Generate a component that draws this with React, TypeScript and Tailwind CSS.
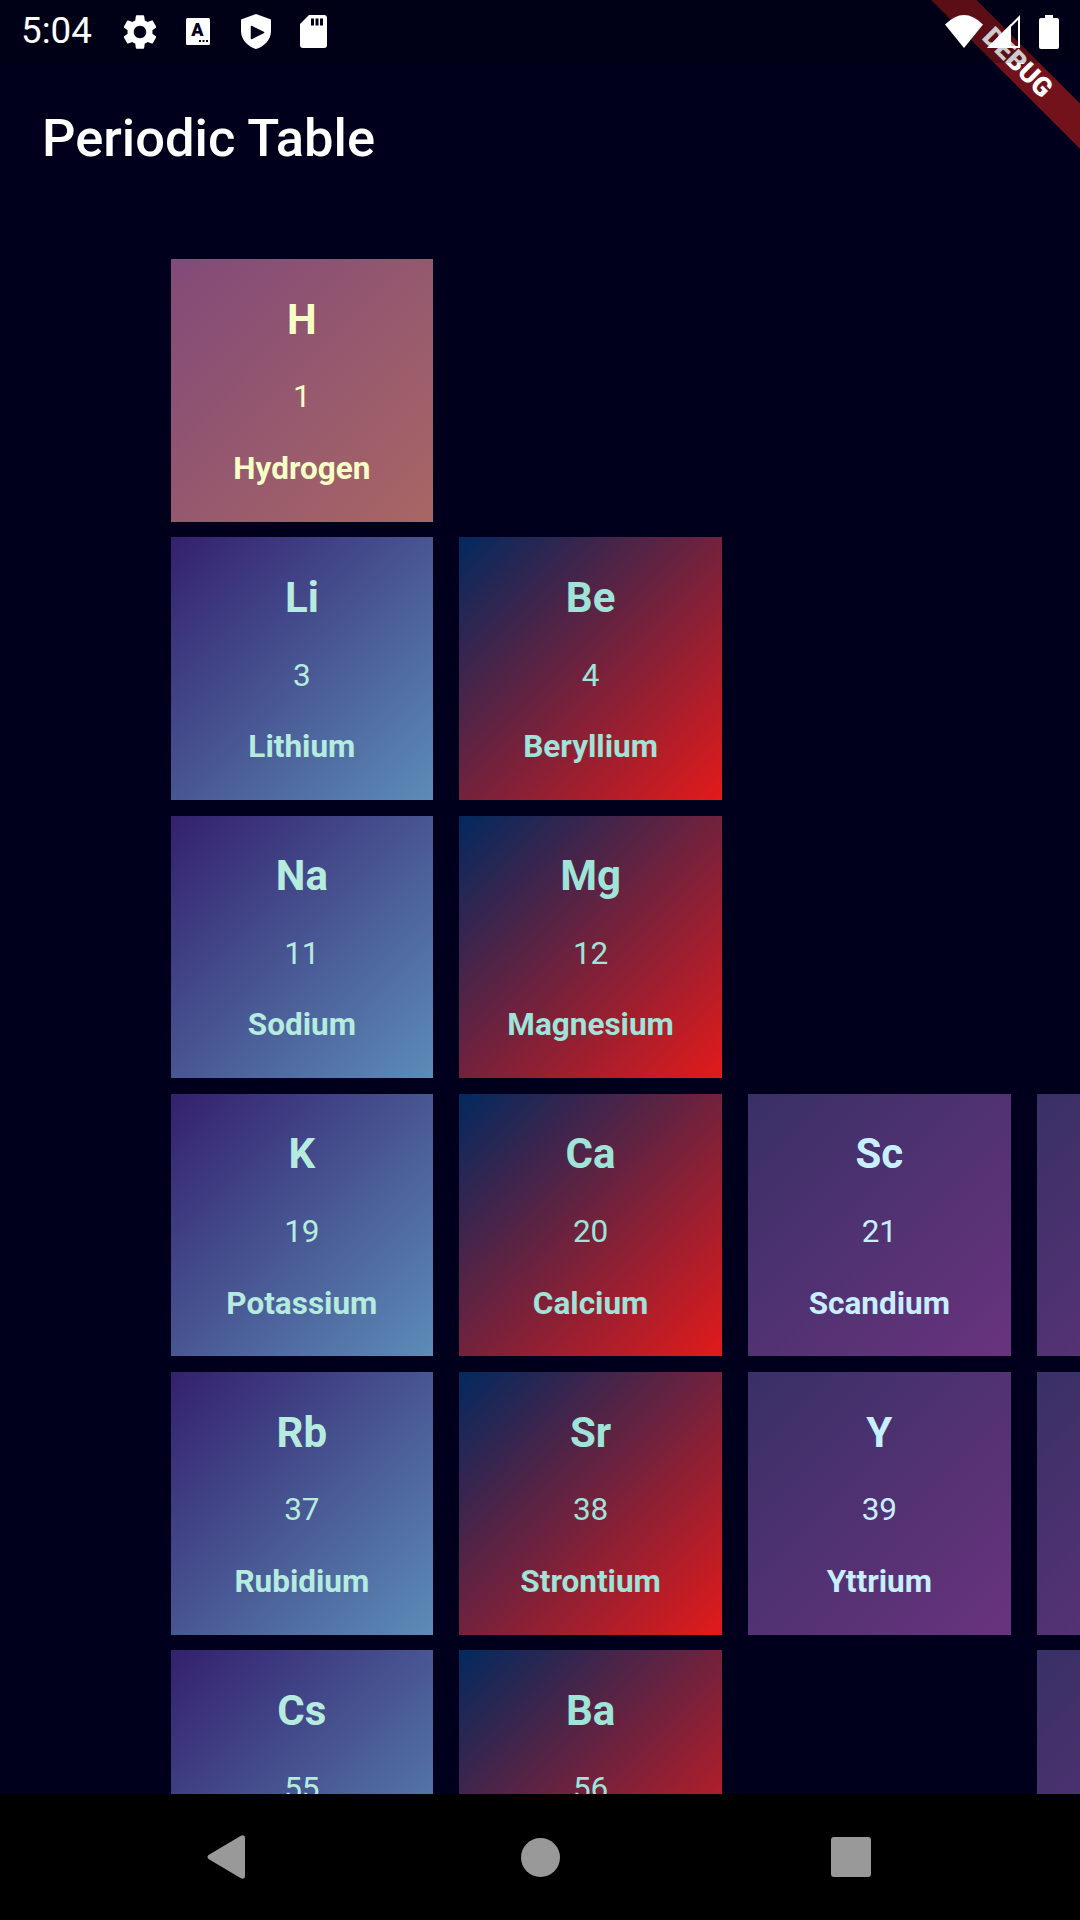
import React from "react";

type Element = {
  symbol: string;
  number: number;
  name: string;
  style: string;
};

const hydrogen = "from-[#824a79] to-[#a96664] text-[#f6ffc6]";
const alkali = "from-[#34206e] to-[#5c8cb8] text-[#b5ecdf]";
const alkaline = "from-[#02295f] to-[#e31a1a] text-[#a0e3d9]";
const transition = "from-[#393067] to-[#69337d] text-[#c8efff]";

const rows: (Element | null)[][] = [
  [{ symbol: "H", number: 1, name: "Hydrogen", style: hydrogen }, null, null, null],
  [
    { symbol: "Li", number: 3, name: "Lithium", style: alkali },
    { symbol: "Be", number: 4, name: "Beryllium", style: alkaline },
    null,
    null,
  ],
  [
    { symbol: "Na", number: 11, name: "Sodium", style: alkali },
    { symbol: "Mg", number: 12, name: "Magnesium", style: alkaline },
    null,
    null,
  ],
  [
    { symbol: "K", number: 19, name: "Potassium", style: alkali },
    { symbol: "Ca", number: 20, name: "Calcium", style: alkaline },
    { symbol: "Sc", number: 21, name: "Scandium", style: transition },
    { symbol: "Ti", number: 22, name: "Titanium", style: transition },
  ],
  [
    { symbol: "Rb", number: 37, name: "Rubidium", style: alkali },
    { symbol: "Sr", number: 38, name: "Strontium", style: alkaline },
    { symbol: "Y", number: 39, name: "Yttrium", style: transition },
    { symbol: "Zr", number: 40, name: "Zirconium", style: transition },
  ],
  [
    { symbol: "Cs", number: 55, name: "Cesium", style: alkali },
    { symbol: "Ba", number: 56, name: "Barium", style: alkaline },
    null,
    { symbol: "Hf", number: 72, name: "Hafnium", style: transition },
  ],
];

const ElementCard: React.FC<{ element: Element }> = ({ element }) => (
  <div
    className={`flex h-[262.5px] w-[262.5px] flex-col items-center justify-evenly bg-linear-to-br/srgb pt-[1px] ${element.style}`}
  >
    <div className="text-[42px] leading-[49px] font-bold">{element.symbol}</div>
    <div className="text-[31.5px] leading-[37px] font-normal">{element.number}</div>
    <div className="text-[31.5px] leading-[37px] font-bold">{element.name}</div>
  </div>
);

const StatusBar: React.FC = () => (
  <div className="relative z-20 flex h-[63px] shrink-0 items-center bg-black/20 text-white">
    <span className="ml-[21px] w-[102px] text-[36.75px] leading-none">5:04</span>
    <svg viewBox="2.6 2.2 18.8 19.6" className="h-[34px] w-[34px] fill-white">
      <path
        fillRule="evenodd"
        d="M19.14 12.94c.04-.3.06-.61.06-.94 0-.32-.02-.64-.07-.94l2.03-1.58a.49.49 0 0 0 .12-.61l-1.92-3.32a.488.488 0 0 0-.59-.22l-2.39.96c-.5-.38-1.03-.7-1.62-.94l-.36-2.54a.484.484 0 0 0-.48-.41h-3.84c-.24 0-.43.17-.47.41l-.36 2.54c-.59.24-1.13.57-1.62.94l-2.39-.96c-.22-.08-.47 0-.59.22L2.74 8.87c-.12.21-.08.47.12.61l2.03 1.58c-.05.3-.09.63-.09.94s.02.64.07.94l-2.03 1.58a.49.49 0 0 0-.12.61l1.92 3.32c.12.22.37.29.59.22l2.39-.96c.5.38 1.03.7 1.62.94l.36 2.54c.05.24.24.41.48.41h3.84c.24 0 .44-.17.47-.41l.36-2.54c.59-.24 1.13-.56 1.62-.94l2.39.96c.22.08.47 0 .59-.22l1.92-3.32c.12-.22.07-.47-.12-.61l-2.01-1.58zM12 15.6c-1.98 0-3.6-1.62-3.6-3.6s1.62-3.6 3.6-3.6 3.6 1.62 3.6 3.6-1.62 3.6-3.6 3.6z"
      />
    </svg>
    <svg viewBox="0 0 24 27" className="ml-[29px] h-[27px] w-[24px]">
      <rect width="24" height="27" rx="1.5" fill="#fff" />
      <text x="11.5" y="17.5" textAnchor="middle" fontFamily="Roboto" fontWeight="900" fontSize="18" fill="#00001a">
        A
      </text>
      <rect x="13" y="22" width="2" height="2" fill="#00001a" />
      <rect x="16.5" y="22" width="2" height="2" fill="#00001a" />
      <rect x="20" y="22" width="2" height="2" fill="#00001a" />
    </svg>
    <svg viewBox="0 0 30 35" className="ml-[31px] h-[35px] w-[30px]">
      <path d="M15 0 L30 5.5 V17 C30 26 23 32.5 15 35 C7 32.5 0 26 0 17 V5.5 Z" fill="#fff" />
      <path d="M10.5 12.5 L22.5 18.5 L10.5 24.5 Z" fill="#00001a" stroke="#00001a" strokeWidth="1.5" strokeLinejoin="round" />
    </svg>
    <svg viewBox="0 0 27 33" className="ml-[29px] h-[33px] w-[27px]">
      <path d="M9 0 H24 a3 3 0 0 1 3 3 V30 a3 3 0 0 1-3 3 H3 a3 3 0 0 1-3-3 V9 Z" fill="#fff" />
      <rect x="11" y="3.5" width="3" height="7" fill="#00001a" />
      <rect x="15.5" y="3.5" width="3" height="7" fill="#00001a" />
      <rect x="20" y="3.5" width="3" height="7" fill="#00001a" />
    </svg>
    <svg viewBox="0 0 38 33" className="ml-auto h-[33px] w-[38px] fill-white">
      <path d="M19 33 L0 9.5 Q19 -9.5 38 9.5 Z" />
    </svg>
    <svg viewBox="0 0 33 33" className="ml-[4px] h-[33px] w-[33px]">
      <path d="M32 2.5 V32 H2.5 Z" fill="none" stroke="#fff" strokeWidth="2" />
      <path d="M0 33 H24 V9 Z" fill="#fff" />
    </svg>
    <svg viewBox="0 0 20 34" className="mr-[21px] ml-[19px] h-[34px] w-[20px] fill-white">
      <path d="M6 0 H14 V3 H18 a2 2 0 0 1 2 2 V32 a2 2 0 0 1-2 2 H2 a2 2 0 0 1-2-2 V5 a2 2 0 0 1 2-2 H6 Z" />
    </svg>
  </div>
);

const NavBar: React.FC = () => (
  <div className="flex h-[126px] shrink-0 items-center bg-black">
    <svg viewBox="0 0 38 44" className="ml-[207px] h-[44px] w-[38px] fill-[#999999]">
      <path d="M33.5 1 Q38 -1 38 3 V41 Q38 45 33.5 43 L1.5 24 Q-0.5 22 1.5 20 Z" />
    </svg>
    <div className="ml-[276px] h-[39px] w-[39px] rounded-full bg-[#999999]" />
    <div className="ml-[271px] h-[40px] w-[40px] rounded-[3px] bg-[#999999]" />
  </div>
);

const App: React.FC = () => {
  return (
    <div className="relative flex h-[1920px] w-[1080px] flex-col overflow-hidden bg-[#00001c] font-[family-name:Roboto,sans-serif]">
      <StatusBar />

      {/* flutter debug ribbon, sits under the status bar scrim */}
      <div className="absolute top-[49px] right-[-89px] z-10 flex h-[31.5px] w-[300px] rotate-45 items-center justify-center bg-[#b71c1c]/[0.63] pr-[5px] text-[26.8px] leading-none font-black text-white">
        DEBUG
      </div>

      <div className="flex h-[147px] shrink-0 items-center pt-[4px] pl-[42px] text-[52.5px] font-medium text-white">
        Periodic Table
      </div>

      <div className="min-h-0 flex-1 overflow-hidden pt-[49px] pl-[170.6px]">
        <div className="grid w-max grid-cols-[repeat(4,262.5px)] gap-x-[26.25px] gap-y-[15.75px]">
          {rows.flatMap((row, r) =>
            row.map((element, c) =>
              element ? <ElementCard key={`${r}-${c}`} element={element} /> : <div key={`${r}-${c}`} />
            )
          )}
        </div>
      </div>

      <NavBar />
    </div>
  );
};

export default App;
